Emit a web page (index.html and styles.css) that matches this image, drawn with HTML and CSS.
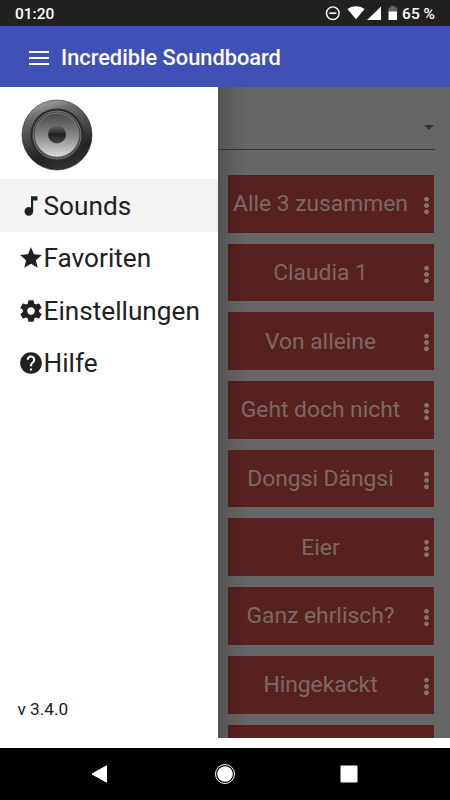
FILE: index.html
```html
<!DOCTYPE html>
<html lang="de">
  <head>
    <meta charset="UTF-8" />
    <title>Incredible Soundboard</title>
    <link rel="stylesheet" href="styles.css">
  </head>
  <body>
    <!-- Statusleiste -->
    <div class="status-bar">
      <span class="clock">01:20</span>
      <svg class="status-icons" width="76" height="20" viewBox="0 0 76 20">
        <circle cx="7.8" cy="9.2" r="6.3" fill="none" stroke="#fff" stroke-width="1.4" />
        <path d="M4.300 9.200h7" stroke="#fff" stroke-width="1.6" />
        <path d="M31 2.200c-3.300 0-6.200 1-8.600 2.900L31 15.300l8.600-10.200C37.200 3.200 34.300 2.200 31 2.200z" fill="#fff" />
        <path d="M56 2.500v13.500H42z" fill="#fff" />
        <path d="M63.500 3.500h2.200v-1.500h4v1.500H72V8h-8.500z" fill="#666" />
        <path d="M63.500 7.500H72V16h-8.500z" fill="#fff" />
      </svg>
      <span class="battery">65 %</span>
    </div>

    <div class="app-bar">
      <svg width="20" height="14" viewBox="0 0 20 14">
        <path d="M0 1h20M0 7h20M0 13h20" stroke="#fff" stroke-width="2" />
      </svg>
      <h1>Incredible Soundboard</h1>
    </div>

    <div class="main">
      <!-- Menü -->
      <div class="drawer">
        <svg class="logo" width="72" height="72" viewBox="0 0 72 72">
          <defs>
            <linearGradient id="rim" x1=".3" y1="0" x2=".6" y2="1">
              <stop offset="0" stop-color="#aaa" />
              <stop offset=".2" stop-color="#6a6a6a" />
              <stop offset=".5" stop-color="#444" />
              <stop offset=".75" stop-color="#222" />
              <stop offset="1" stop-color="#333" />
            </linearGradient>
            <linearGradient id="cone" x1="0" y1="0" x2="0" y2="1">
              <stop offset="0" stop-color="#484848" />
              <stop offset=".5" stop-color="#858585" />
              <stop offset="1" stop-color="#dcdcdc" />
            </linearGradient>
            <linearGradient id="cap" x1="0" y1="0" x2="0" y2="1">
              <stop offset="0" stop-color="#666" />
              <stop offset=".5" stop-color="#222" />
              <stop offset="1" stop-color="#444" />
            </linearGradient>
          </defs>
          <circle cx="36" cy="36" r="35" fill="url(#rim)" stroke="#222" stroke-width=".6" />
          <circle cx="36" cy="36" r="26.500" fill="#2b2b2b" />
          <circle cx="36" cy="36" r="24" fill="#444" stroke="#777" stroke-width="1" />
          <circle cx="36" cy="36" r="22" fill="url(#cone)" stroke="#888" stroke-width=".8" />
          <circle cx="36" cy="35.500" r="9" fill="url(#cap)" />
        </svg>
        <ul class="menu">
          <li class="menu-item active">
            <svg width="26" height="26" viewBox="0 0 24 24"><path d="M12 3v10.550c-.59-.34-1.270-.55-2-.55-2.210 0-4 1.790-4 4s1.790 4 4 4 4-1.790 4-4V7h4V3h-6z" /></svg>
            Sounds
          </li>
          <li class="menu-item">
            <svg width="26" height="26" viewBox="0 0 24 24"><path d="M12 17.270L18.180 21l-1.640-7.030L22 9.240l-7.190-.61L12 2 9.190 8.630 2 9.240l5.460 4.730L5.820 21z" /></svg>
            Favoriten
          </li>
          <li class="menu-item">
            <svg width="26" height="26" viewBox="0 0 24 24"><path d="M19.430 12.980c.04-.32.070-.64.070-.98s-.03-.66-.07-.98l2.110-1.650c.19-.15.240-.42.120-.64l-2-3.460c-.12-.22-.39-.3-.61-.22l-2.490 1c-.52-.4-1.080-.73-1.690-.98l-.38-2.650C14.460 2.180 14.250 2 14 2h-4c-.25 0-.46.180-.49.420l-.38 2.650c-.61.250-1.170.590-1.690.980l-2.490-1c-.23-.09-.49 0-.61.220l-2 3.460c-.13.220-.07.490.120.640l2.110 1.650c-.04.320-.07.650-.07.980s.03.660.07.980l-2.110 1.650c-.19.150-.24.420-.12.640l2 3.460c.12.220.39.300.61.220l2.490-1c.52.400 1.080.730 1.690.980l.38 2.650c.03.240.24.420.49.420h4c.25 0 .46-.18.490-.42l.38-2.650c.61-.25 1.170-.59 1.690-.98l2.490 1c.23.090.49 0 .61-.22l2-3.460c.12-.22.070-.49-.12-.64l-2.110-1.650zM12 15.500c-1.930 0-3.500-1.570-3.500-3.500s1.570-3.500 3.500-3.500 3.500 1.570 3.500 3.500-1.570 3.500-3.500 3.500z" /></svg>
            Einstellungen
          </li>
          <li class="menu-item">
            <svg width="26" height="26" viewBox="0 0 24 24"><path d="M12 2C6.480 2 2 6.480 2 12s4.480 10 10 10 10-4.480 10-10S17.520 2 12 2zm1 17h-2v-2h2v2zm2.070-7.750l-.9.920C13.450 12.900 13 13.500 13 15h-2v-.5c0-1.100.45-2.100 1.170-2.830l1.240-1.260c.37-.36.590-.86.590-1.410 0-1.100-.9-2-2-2s-2 .9-2 2H8c0-2.210 1.790-4 4-4s4 1.790 4 4c0 .88-.36 1.680-.93 2.250z" /></svg>
            Hilfe
          </li>
        </ul>
        <div class="version">v 3.4.0</div>
      </div>

      <!-- Soundliste, abgedunkelt -->
      <div class="content">
        <div class="select"><span class="arrow"></span></div>
        <div class="sounds">
          <div class="sound"><span>Alle 3 zusammen</span><i class="dots"></i></div>
          <div class="sound"><span>Claudia 1</span><i class="dots"></i></div>
          <div class="sound"><span>Von alleine</span><i class="dots"></i></div>
          <div class="sound"><span>Geht doch nicht</span><i class="dots"></i></div>
          <div class="sound"><span>Dongsi Dängsi</span><i class="dots"></i></div>
          <div class="sound"><span>Eier</span><i class="dots"></i></div>
          <div class="sound"><span>Ganz ehrlisch?</span><i class="dots"></i></div>
          <div class="sound"><span>Hingekackt</span><i class="dots"></i></div>
          <div class="sound"></div>
        </div>
      </div>
    </div>

    <div class="nav-bar">
      <svg width="22" height="22" viewBox="0 0 22 22"><path d="M2 11L16.500 2.800v16.400z" fill="#fff" stroke="#fff" stroke-linejoin="round" /></svg>
      <svg width="22" height="22" viewBox="0 0 22 22"><circle cx="11" cy="11" r="7.800" fill="#fff" /><circle cx="11" cy="11" r="9.500" fill="none" stroke="#fff" /></svg>
      <svg width="22" height="22" viewBox="0 0 22 22"><rect x="2.500" y="2.500" width="17" height="17" rx="1" fill="#fff" /></svg>
    </div>
  </body>
</html>
```
FILE: styles.css
```css
body {
  margin: 0;
  width: 450px;
  height: 800px;
  background: #fff;
  overflow: hidden;
  font-family: Roboto, sans-serif;
  display: flex;
  flex-direction: column;
}

.status-bar {
  height: 26px;
  padding: 2px 15px 0;
  box-sizing: border-box;
  background: #212121;
  color: #fff;
  font-size: 15.5px;
  font-weight: 500;
  display: flex;
  align-items: center;
}

.clock {
  flex: 1;
}

.status-icons {
  margin-right: 1px;
}

.app-bar {
  height: 61px;
  padding-left: 29px;
  background: #3f51b5;
  color: #fff;
  display: flex;
  align-items: center;
  gap: 12px;
}

.app-bar svg {
  margin-top: 2px;
}

.app-bar h1 {
  margin: 2px 0 0;
  font-size: 21.8px;
  font-weight: 500;
}

.main {
  height: 651px;
  display: flex;
}

.drawer {
  width: 218px;
  height: 661px;
  flex-shrink: 0;
  background: #fff;
  display: flex;
  flex-direction: column;
}

.logo {
  margin: 12px 0 8px 21px;
}

.menu {
  margin: 0;
  padding: 0;
  list-style: none;
}

.menu-item {
  height: 52.5px;
  padding: 1px 0 0 17.5px;
  box-sizing: border-box;
  display: flex;
  align-items: center;
  color: #212121;
  font-size: 26.2px;
}

.menu-item svg {
  fill: #212121;
}

.menu-item.active {
  background: #f4f4f4;
}

.version {
  margin: auto 0 29px 17.5px;
  color: #212121;
  font-size: 17.2px;
}

.content {
  flex: 1;
  background: linear-gradient(to right, rgba(0, 0, 0, 0.2), rgba(0, 0, 0, 0.08) 14px, transparent 30px), #666;
  overflow: hidden;
}

.select {
  height: 62px;
  margin-right: 15px;
  border-bottom: 1px solid #333;
  display: flex;
  justify-content: flex-end;
}

.arrow {
  width: 0;
  height: 0;
  margin: 38px 1px 0 0;
  border: 5px solid transparent;
  border-top-color: #363636;
  border-bottom: none;
}

.sounds {
  padding: 25px 16px 0 10px;
  display: flex;
  flex-direction: column;
  gap: 11px;
}

.sound {
  height: 57.7px;
  flex-shrink: 0;
  background: linear-gradient(to right, rgba(0, 0, 0, 0.08), transparent 20px), #572120;
  color: #7d6866;
  font-size: 22.8px;
  display: flex;
  align-items: center;
}

.sound span {
  flex: 1;
  padding-left: 1px;
  text-align: center;
  white-space: nowrap;
}

.dots {
  width: 5px;
  height: 19px;
  margin: 3px 5px 0 12px;
  background: radial-gradient(circle, #857270 2.1px, transparent 2.6px) 0 0 / 5px 6.33px;
}

.nav-bar {
  height: 52px;
  margin-top: 10px;
  background: #000;
  display: flex;
  align-items: center;
  justify-content: center;
  gap: 102px;
}
```
